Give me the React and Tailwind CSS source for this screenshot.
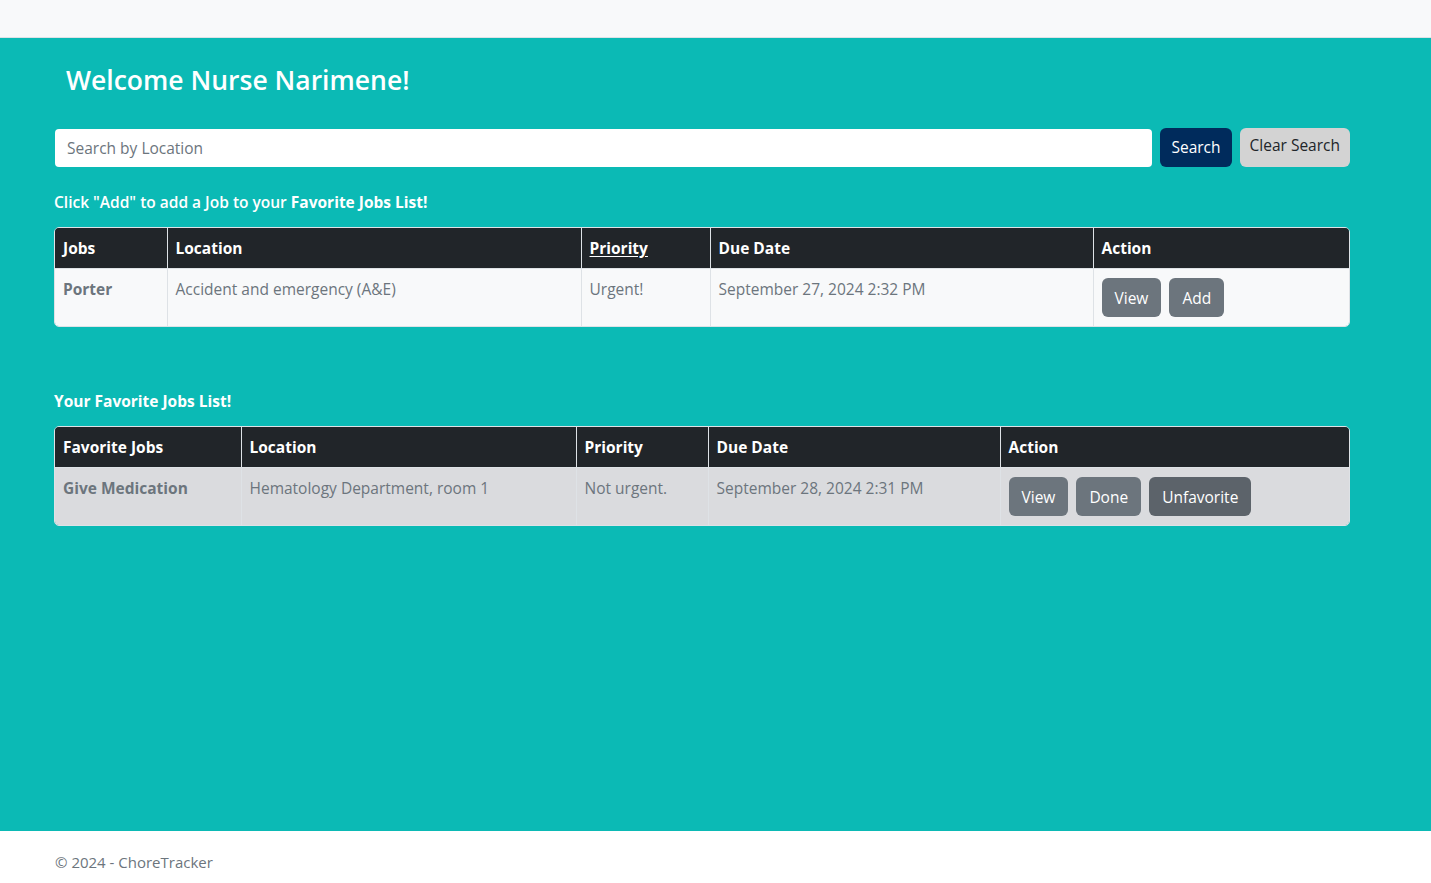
const font = { fontFamily: '"Segoe UI", "Open Sans", "Liberation Sans", sans-serif' };

function Btn({ children, dark }) {
  return (
    <button
      type="button"
      className={`h-[39px] rounded-md px-[13px] text-[15.5px] text-white ${dark ? "bg-[#5c636a]" : "bg-[#6c757d]"}`}
    >
      {children}
    </button>
  );
}

function JobTable({ cols, widths, row, rowBg, actions }) {
  return (
    <div className="overflow-hidden rounded-[5px] border border-[#dee2e6]">
      <table className="w-full table-fixed border-collapse text-[15.5px] leading-6">
        <thead>
          <tr className="bg-[#212529] text-white">
            {cols.map((c, i) => (
              <th
                key={c.label}
                className={`${widths[i]} border-l border-[#dee2e6] px-2 py-2 text-left font-bold first:border-l-0`}
              >
                {c.underline ? <span className="underline underline-offset-2">{c.label}</span> : c.label}
              </th>
            ))}
          </tr>
        </thead>
        <tbody>
          <tr className={`${rowBg} border-t border-[#dee2e6] text-[#6c757d]`}>
            <td className="px-2 py-2 align-top font-bold">{row[0]}</td>
            <td className="border-l border-[#dee2e6] px-2 py-2 align-top">{row[1]}</td>
            <td className="border-l border-[#dee2e6] px-2 py-2 align-top">{row[2]}</td>
            <td className="border-l border-[#dee2e6] px-2 py-2 align-top">{row[3]}</td>
            <td className="border-l border-[#dee2e6] px-2 pt-[9px] pb-[9px] align-top">
              <div className="flex gap-2">{actions}</div>
            </td>
          </tr>
        </tbody>
      </table>
    </div>
  );
}

export default function App() {
  return (
    <div className="flex min-h-[883px] flex-col" style={font}>
      <nav className="h-[38px] border-b border-[#dee2e6] bg-[#f8f9fa]" />
      <main className="flex-1 bg-[#0bbab5]">
        <div className="ml-[54px] w-[1296px]">
          <h1 className="px-3 pt-[24px] text-[26.5px] font-semibold leading-9 text-white">Welcome Nurse Narimene!</h1>
          <div className="mt-[30px] flex items-center gap-2">
            <input
              placeholder="Search by Location"
              className="ml-px h-[38px] flex-1 rounded-[4px] bg-white px-3 text-[15.5px] text-[#212529] placeholder:text-[#6c757d] outline-none"
            />
            <button type="button" className="h-[39px] rounded-md bg-[#002b5c] px-[11px] text-[15.5px] text-white">
              Search
            </button>
            <button type="button" className="h-[39px] rounded-md bg-[#d3d3d3] px-[10px] pb-1 text-[15.5px] text-[#212529]">
              Clear Search
            </button>
          </div>
          <p className="mt-[23px] text-[15.5px] leading-[25px] font-semibold text-white">
            Click "Add" to add a Job to your <span className="font-bold">Favorite Jobs List!</span>
          </p>
          <div className="mt-[12px]">
            <JobTable
              cols={[{ label: "Jobs" }, { label: "Location" }, { label: "Priority", underline: true }, { label: "Due Date" }, { label: "Action" }]}
              widths={["w-[112px]", "w-[414px]", "w-[129px]", "w-[383px]", "w-[258px]"]}
              row={["Porter", "Accident and emergency (A&E)", "Urgent!", "September 27, 2024 2:32 PM"]}
              rowBg="bg-[#f8f9fa]"
              actions={
                <>
                  <Btn>View</Btn>
                  <Btn>Add</Btn>
                </>
              }
            />
          </div>
          <p className="mt-[62px] text-[15.5px] leading-[25px] font-bold text-white">Your Favorite Jobs List!</p>
          <div className="mt-[12px]">
            <JobTable
              cols={[{ label: "Favorite Jobs" }, { label: "Location" }, { label: "Priority" }, { label: "Due Date" }, { label: "Action" }]}
              widths={["w-[186px]", "w-[335px]", "w-[132px]", "w-[292px]", "w-[351px]"]}
              row={["Give Medication", "Hematology Department, room 1", "Not urgent.", "September 28, 2024 2:31 PM"]}
              rowBg="bg-[#dadbde]"
              actions={
                <>
                  <Btn>View</Btn>
                  <Btn>Done</Btn>
                  <Btn dark>Unfavorite</Btn>
                </>
              }
            />
          </div>
        </div>
      </main>
      <footer className="h-[52px] bg-white">
        <div className="ml-[55px] pt-[20px] text-[15px] text-[#6c757d]">© 2024 - ChoreTracker</div>
      </footer>
    </div>
  );
}
